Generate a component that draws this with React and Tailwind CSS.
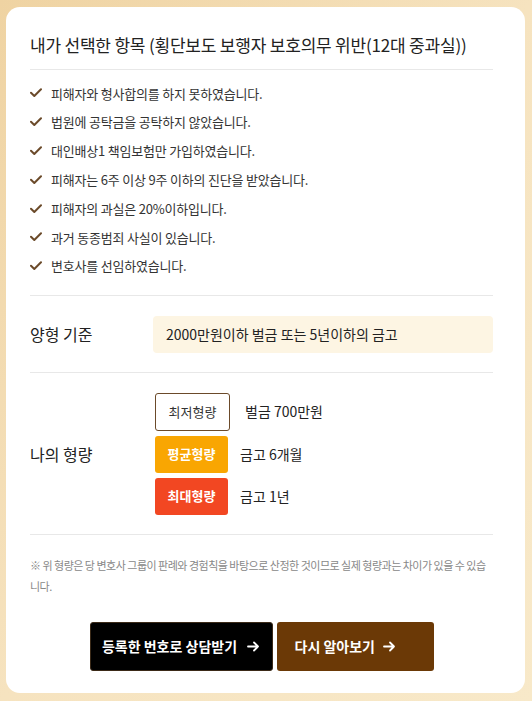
import React from "react";

const font = { fontFamily: '"Noto Sans CJK KR", "Noto Sans", sans-serif' };

const items = [
  "피해자와 형사합의를 하지 못하였습니다.",
  "법원에 공탁금을 공탁하지 않았습니다.",
  "대인배상1 책임보험만 가입하였습니다.",
  "피해자는 6주 이상 9주 이하의 진단을 받았습니다.",
  "피해자의 과실은 20%이하입니다.",
  "과거 동종범죄 사실이 있습니다.",
  "변호사를 선임하였습니다.",
];

function Check() {
  return (
    <svg width="12" height="10" viewBox="0 0 12 10" className="shrink-0">
      <path d="M1 4.8 L4.3 8 L11 1.3" fill="none" stroke="#6b4a2a" strokeWidth="2" strokeLinecap="round" strokeLinejoin="round" />
    </svg>
  );
}

function Arrow() {
  return (
    <svg width="13" height="11" viewBox="0 0 13 11" className="shrink-0">
      <path d="M1 5.5 H11 M7 1.5 L11 5.5 L7 9.5" fill="none" stroke="#fff" strokeWidth="1.8" strokeLinecap="round" strokeLinejoin="round" />
    </svg>
  );
}

export default function App() {
  return (
    <div
      className="w-[532px] h-[701px] overflow-hidden bg-gradient-to-br from-[#efd3a2] via-[#f6e3bf] to-[#f8e9c9] pt-[7px] pl-[6px]"
      style={font}
    >
      <div className="w-[519px] h-[686px] bg-white rounded-[14px] pl-6 pr-8 pt-[25px] flex flex-col">
        <h2 className="text-[17px] leading-[26px] text-[#222] font-normal tracking-[-0.2px] pb-[11px] border-b border-[#e8e8e8]">
          내가 선택한 항목 (횡단보도 보행자 보호의무 위반(12대 중과실))
        </h2>

        <ul className="pt-[9px] pb-[14px] border-b border-[#e8e8e8]">
          {items.map((t) => (
            <li key={t} className="h-[28.8px] flex items-center gap-[9px] text-[13px] tracking-[-0.2px] text-[#333]">
              <Check />
              <span>{t}</span>
            </li>
          ))}
        </ul>

        <div className="flex items-center pt-5 pb-[19px] border-b border-[#e8e8e8]">
          <div className="w-[123px] text-[16px] text-[#222]">양형 기준</div>
          <div className="flex-1 h-[37px] flex items-center bg-[#fdf5e3] rounded-[4px] px-[13px] text-[14px] text-[#222]">
            2000만원이하 벌금 또는 5년이하의 금고
          </div>
        </div>

        <div className="flex items-center pt-5 pb-[19px] border-b border-[#e8e8e8]">
          <div className="w-[125px] text-[16px] text-[#222]">나의 형량</div>
          <div className="flex flex-col gap-[5px]">
            <div className="flex items-center gap-[15px]">
              <span className="w-[75px] h-[38px] flex items-center justify-center rounded-[3px] border border-[#6b4a2a] text-[13px] text-[#333]">
                최저형량
              </span>
              <span className="text-[14px] text-[#222]">벌금 700만원</span>
            </div>
            <div className="flex items-center gap-[12px]">
              <span className="w-[73px] h-[37px] flex items-center justify-center rounded-[3px] bg-[#f9a602] text-[13px] font-bold text-white">
                평균형량
              </span>
              <span className="text-[14px] text-[#222]">금고 6개월</span>
            </div>
            <div className="flex items-center gap-[12px]">
              <span className="w-[73px] h-[37px] flex items-center justify-center rounded-[3px] bg-[#f24722] text-[13px] font-bold text-white">
                최대형량
              </span>
              <span className="text-[14px] text-[#222]">금고 1년</span>
            </div>
          </div>
        </div>

        <p className="pt-5 text-[11px] leading-[21px] tracking-[-0.5px] break-all text-[#888]">
          ※ 위 형량은 당 변호사 그룹이 판례와 경험칙을 바탕으로 산정한 것이므로 실제 형량과는 차이가 있을 수 있습니다.
        </p>

        <div className="flex justify-center gap-[4px] mt-[25px]">
          <button className="w-[183px] h-[49px] flex items-center justify-center gap-[10px] bg-black border border-[#3b2a18] rounded-[3px] text-[14px] font-bold text-white">
            등록한 번호로 상담받기
            <Arrow />
          </button>
          <button className="w-[157px] h-[49px] flex items-center justify-start pl-[18px] gap-[8px] bg-[#6b3906] rounded-[3px] text-[14px] font-bold text-white">
            다시 알아보기
            <Arrow />
          </button>
        </div>
      </div>
    </div>
  );
}
